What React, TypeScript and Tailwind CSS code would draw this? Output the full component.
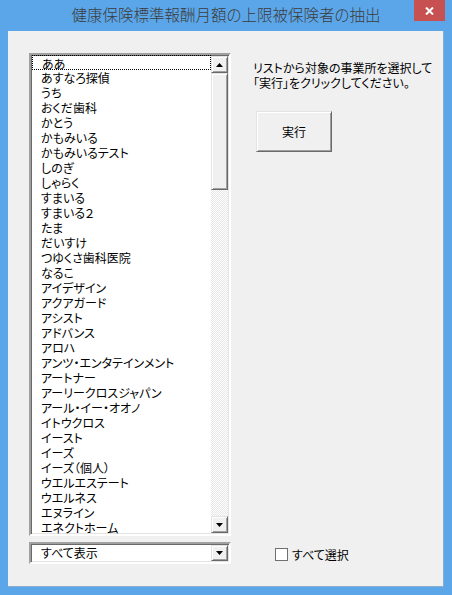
/******************************************************************************
                              Data
******************************************************************************/

const OFFICES = [
  "ああ",
  "あすなろ探偵",
  "うち",
  "おくだ歯科",
  "かとう",
  "かもみいる",
  "かもみいるテスト",
  "しのぎ",
  "しゃらく",
  "すまいる",
  "すまいる２",
  "たま",
  "だいすけ",
  "つゆくさ歯科医院",
  "なるこ",
  "アイデザイン",
  "アクアガード",
  "アシスト",
  "アドバンス",
  "アロハ",
  "アンツ・エンタテインメント",
  "アートナー",
  "アーリークロスジャパン",
  "アール・イー・オオノ",
  "イトウクロス",
  "イースト",
  "イーズ",
  "イーズ（個人）",
  "ウエルエステート",
  "ウエルネス",
  "エヌライン",
  "エネクトホーム",
]

/******************************************************************************
                              Components
******************************************************************************/

/** Small black triangle used on scroll / dropdown buttons. */
function Arrow({ up = false }: { up?: boolean }) {
  return (
    <svg width="7" height="4" viewBox="0 0 7 4" className="block">
      {up ? (
        <polygon points="3.5,0 7,4 0,4" fill="#000" />
      ) : (
        <polygon points="0,0 7,0 3.5,4" fill="#000" />
      )}
    </svg>
  )
}

/** Classic raised 3D button face. */
function Raised({
  className = "",
  children,
}: {
  className?: string
  children?: React.ReactNode
}) {
  return (
    <div
      className={`flex items-center justify-center border border-t-[#e3e3e3] border-l-[#e3e3e3] border-r-[#696969] border-b-[#696969] bg-[#f0f0f0] shadow-[inset_1px_1px_0_#ffffff,inset_-1px_-1px_0_#a0a0a0] ${className}`}
    >
      {children}
    </div>
  )
}

function OfficeList() {
  return (
    <div className="flex h-[483px] w-[202px] border-2 border-t-[#a0a0a0] border-l-[#a0a0a0] border-r-white border-b-white bg-white shadow-[inset_1px_1px_0_#696969,inset_-1px_-1px_0_#e3e3e3]">
      <div className="flex-1 overflow-hidden pl-px">
        {OFFICES.map((name, i) => (
          <div
            key={name}
            className={`h-[15px] pl-[9px] leading-[15px] whitespace-nowrap ${
              i === 0 ? "border border-dotted border-black pl-[8px] leading-[13px]" : ""
            }`}
          >
            {name}
          </div>
        ))}
      </div>
      <div className="my-px mr-px flex w-[17px] flex-col bg-[repeating-conic-gradient(#ffffff_0_25%,#e6e6e6_0_50%)] bg-size-[2px_2px]">
        <Raised className="h-[17px]">
          <Arrow up />
        </Raised>
        <Raised className="h-[117px]" />
        <div className="flex-1" />
        <Raised className="h-[17px]">
          <Arrow />
        </Raised>
      </div>
    </div>
  )
}

function FilterCombo() {
  return (
    <div className="mt-[6px] flex h-[22px] w-[202px] border-2 border-t-[#a0a0a0] border-l-[#a0a0a0] border-r-white border-b-white bg-white shadow-[inset_1px_1px_0_#696969,inset_-1px_-1px_0_#e3e3e3]">
      <div className="flex-1 pl-[10px] leading-[18px]">すべて表示</div>
      <Raised className="my-px mr-px w-[17px]">
        <Arrow />
      </Raised>
    </div>
  )
}

function App() {
  return (
    <div className="flex h-[595px] w-[452px] flex-col bg-[#5ba6e9] font-['Noto_Sans_CJK_JP',sans-serif] text-[12px] text-black [font-feature-settings:'palt']">
      {/* title bar */}
      <div className="relative flex h-[31px] shrink-0 items-center justify-center pb-px text-[15.5px] font-light text-[#3c3c3c]">
        健康保険標準報酬月額の上限被保険者の抽出
        <div className="absolute top-0 right-[7px] flex h-[21px] w-[31px] items-center justify-center bg-[#c75050]">
          <svg width="9" height="8" viewBox="0 0 9 8">
            <path d="M1 0.5 L8 7.5 M8 0.5 L1 7.5" stroke="#fff" strokeWidth="2" />
          </svg>
        </div>
      </div>

      {/* client area */}
      <div className="mx-[8px] mb-[8px] flex flex-1 flex-col border-r border-b border-[#8aaed0] bg-[#f0f0f0] pt-[22px] pl-[21px]">
        <div className="flex">
          <div className="flex flex-col">
            <OfficeList />
            <FilterCombo />
          </div>

          <div className="ml-[22px] flex flex-col pb-[2px]">
            <p className="mt-[7px] leading-[15px] whitespace-nowrap">
              リストから対象の事業所を選択して
              <br />
              「実行」をクリックしてください。
            </p>
            <Raised className="mt-[21px] ml-[3px] h-[41px] w-[76px]">
              <span>実行</span>
            </Raised>
            <label className="mt-auto ml-[22px] flex items-center gap-[4px] leading-[15px]">
              <span className="h-[13px] w-[13px] border border-[#707070] bg-white" />
              すべて選択
            </label>
          </div>
        </div>
      </div>
    </div>
  )
}

/******************************************************************************
                              Export
******************************************************************************/

export default App
